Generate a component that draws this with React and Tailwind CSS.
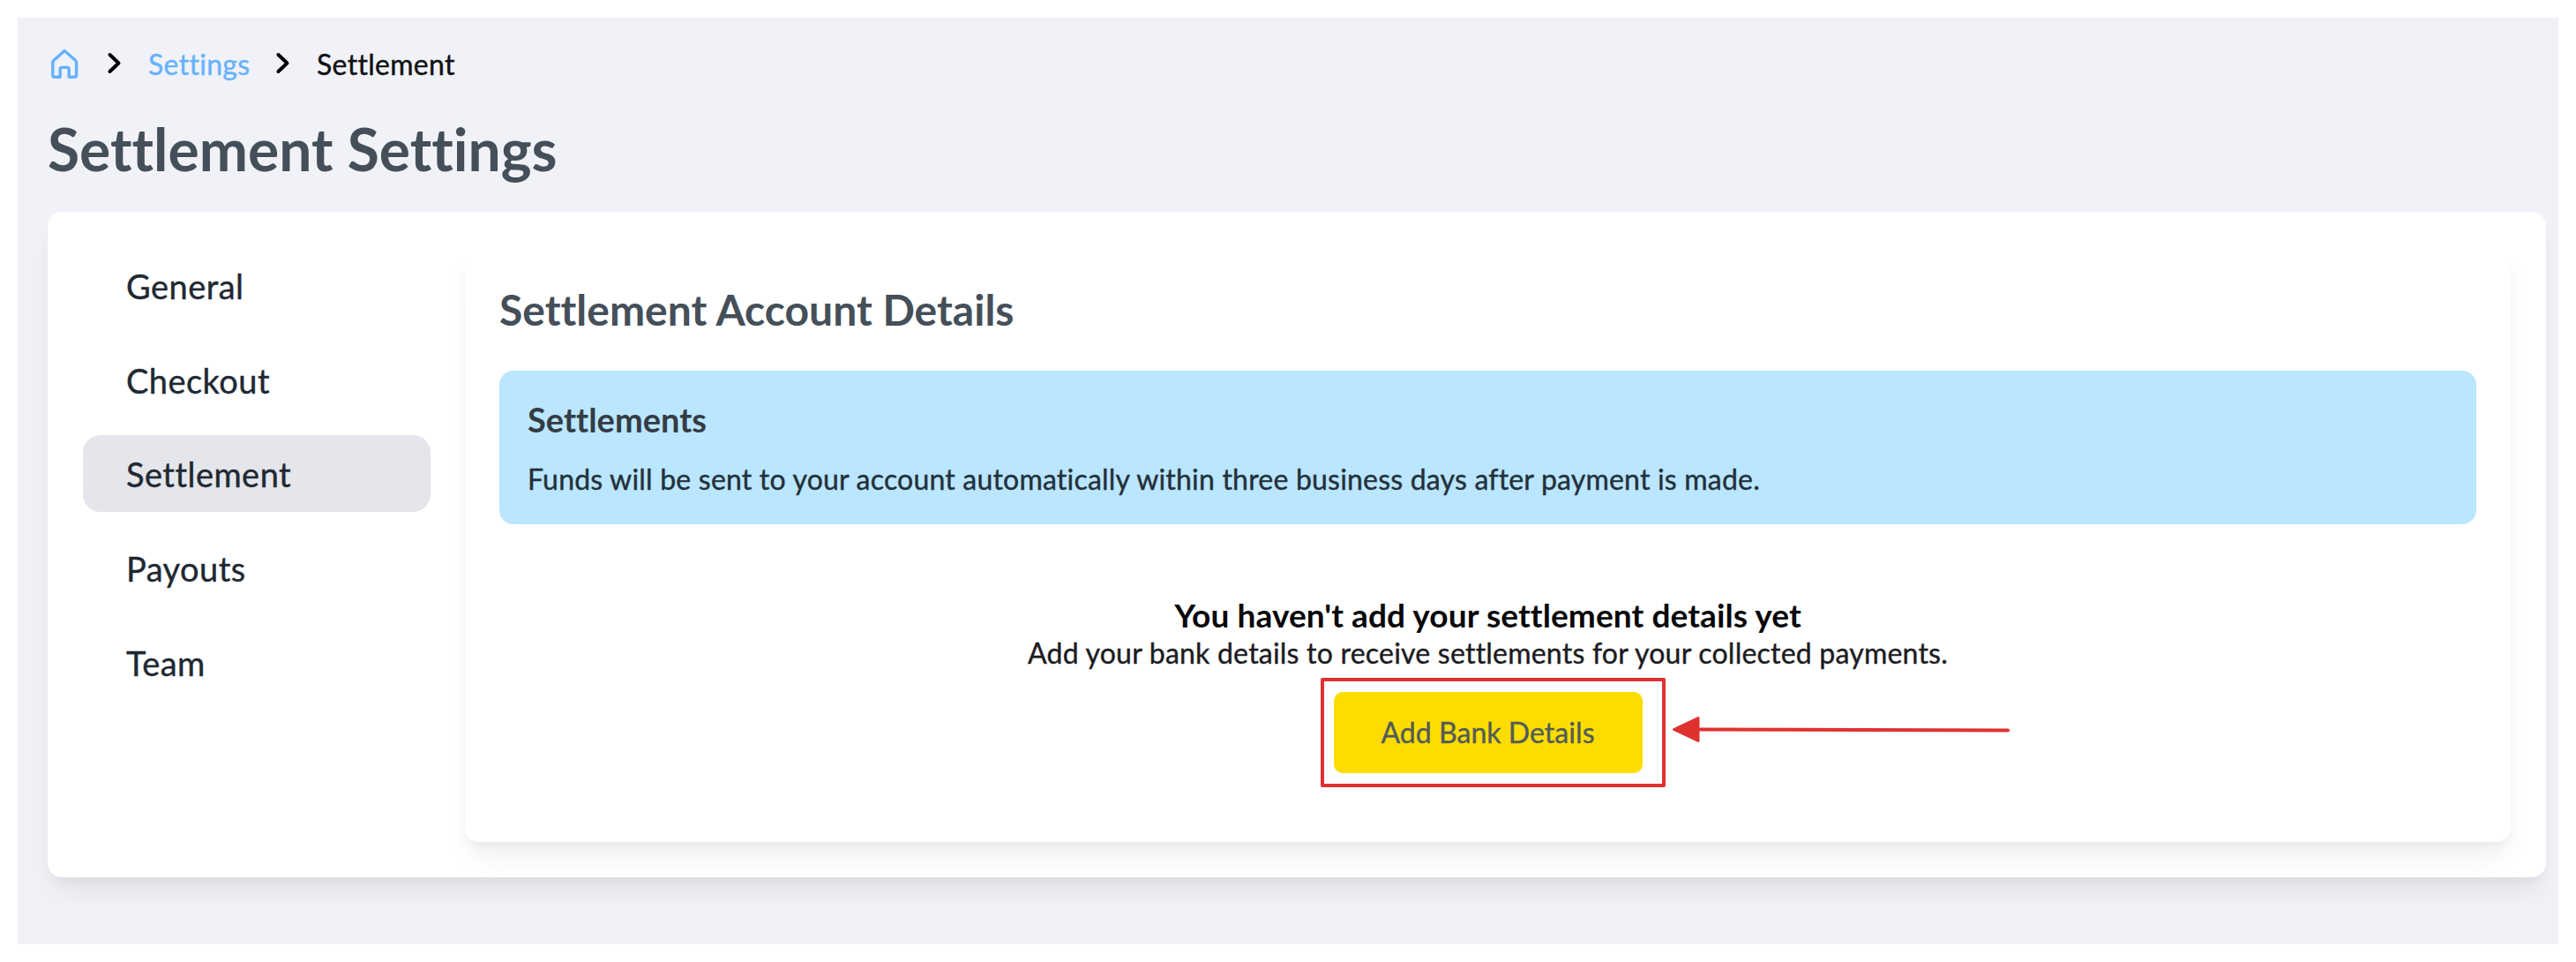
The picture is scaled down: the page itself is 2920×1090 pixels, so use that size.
const navItems = [
  { label: 'General' },
  { label: 'Checkout' },
  { label: 'Settlement', active: true },
  { label: 'Payouts' },
  { label: 'Team' },
]

function HomeIcon() {
  return (
    <svg width="34" height="36" viewBox="0 0 34 36" fill="none" stroke="currentColor" strokeWidth="3.4" strokeLinecap="round" strokeLinejoin="round">
      <path d="M17.2 3.6 L4.6 14.8 a2.4 2.4 0 0 0 -0.8 1.8 V31.6 a1.6 1.6 0 0 0 1.6 1.6 H12.2 V24.4 a2 2 0 0 1 2 -2 H20.2 a2 2 0 0 1 2 2 V33.2 H29 A1.6 1.6 0 0 0 30.6 31.6 V16.6 a2.4 2.4 0 0 0 -0.8 -1.8 Z" />
    </svg>
  )
}

function Chevron() {
  return (
    <svg width="18" height="26" viewBox="0 0 18 26" fill="none" stroke="black" strokeWidth="4" strokeLinecap="round" strokeLinejoin="round">
      <polyline points="3.5,3 13.5,12.5 3.5,22" />
    </svg>
  )
}

function Breadcrumb() {
  return (
    <nav className="flex items-center h-10 pl-0.5 text-[32px] leading-10 tracking-[0.3px] [-webkit-text-stroke:0.4px]">
      <a className="text-[#66b2fd]"><HomeIcon /></a>
      <span className="ml-[31px]"><Chevron /></span>
      <a className="ml-[29px] w-[119px] pt-px text-[#66b2fd]">Settings</a>
      <span className="ml-[25px]"><Chevron /></span>
      <span className="ml-[29px] pt-px text-[#101012]">Settlement</span>
    </nav>
  )
}

function SideNav() {
  return (
    <ul className="w-[394px] flex flex-col gap-5">
      {navItems.map(item => (
        <li
          key={item.label}
          className={`h-[86.7px] flex items-center pl-[49px] pt-0.5 rounded-[20px] text-[38px] tracking-[0.45px] [-webkit-text-stroke:0.4px] text-[#1f2933] ${item.active ? 'bg-[#e5e6eb]' : ''}`}
        >
          {item.label}
        </li>
      ))}
    </ul>
  )
}

function AddBankButton() {
  return (
    <div className="relative mt-6">
      <button className="block w-[350px] h-[92px] rounded-[10px] bg-[#fddd00] text-[32px] tracking-[0.05px] [-webkit-text-stroke:0.4px] text-[#535b58]">
        Add Bank Details
      </button>

      {/* Highlight */}
      <div className="absolute -left-[15px] -top-4 w-[391px] h-[124px] border-4 border-[#e03131] rounded-[2px]" />
      <svg className="absolute left-[383px] top-[26px] text-[#e03131]" width="386" height="34" viewBox="0 0 386 34" fill="currentColor" stroke="currentColor" strokeLinecap="round" strokeLinejoin="round">
        <line x1="28" y1="16.5" x2="381" y2="17.5" strokeWidth="4" />
        <path d="M2.5 16.5 L30 3.5 V29.5 Z" strokeWidth="3" />
      </svg>
    </div>
  )
}

function AccountDetails() {
  return (
    <section className="ml-[39px] flex-1 h-[674px] rounded-2xl bg-white px-[39px] pt-10 shadow-[0_20px_30px_-6px_rgba(0,0,0,0.07),0_8px_12px_-4px_rgba(0,0,0,0.04)]">
      <h2 className="h-[61px] leading-[61px] text-[48px] font-bold text-[#454f59]">
        Settlement Account Details
      </h2>

      <div className="mt-[39px] h-[174px] rounded-2xl bg-[#bae6ff] px-8 pt-8">
        <h3 className="h-[47px] leading-[47px] text-[38px] font-bold text-[#343c44]">Settlements</h3>
        <p className="mt-6 leading-10 text-[32px] tracking-[0.2px] [-webkit-text-stroke:0.4px] text-[#23303a]">
          Funds will be sent to your account automatically within three business days after payment is made.
        </p>
      </div>

      <div className="mt-[79px] flex flex-col items-center">
        <h3 className="h-12 leading-[47px] text-[37px] font-bold tracking-[0.1px] text-[#08080a]">
          You haven't add your settlement details yet
        </h3>
        <p className="h-[39px] leading-[38px] text-[32px] tracking-[0.22px] [-webkit-text-stroke:0.4px] text-[#1c1c1f]">
          Add your bank details to receive settlements for your collected payments.
        </p>
        <AddBankButton />
      </div>
    </section>
  )
}

export default function App() {
  return (
    <div className="h-[1090px] bg-white p-5 font-['Lato',sans-serif] [font-variant-ligatures:none]">
      <main className="h-[1050px] overflow-hidden bg-[#f0f2f7] pl-[34px] pr-3.5 pt-8">
        <Breadcrumb />
        <h1 className="mt-[41px] h-[72px] leading-[72px] text-[66px] font-bold text-[#454f59]">
          Settlement Settings
        </h1>
        <div className="mt-[35px] h-[754px] flex rounded-2xl bg-white p-10 shadow-[0_20px_30px_-6px_rgba(0,0,0,0.07),0_8px_12px_-4px_rgba(0,0,0,0.04)]">
          <SideNav />
          <AccountDetails />
        </div>
      </main>
    </div>
  )
}
